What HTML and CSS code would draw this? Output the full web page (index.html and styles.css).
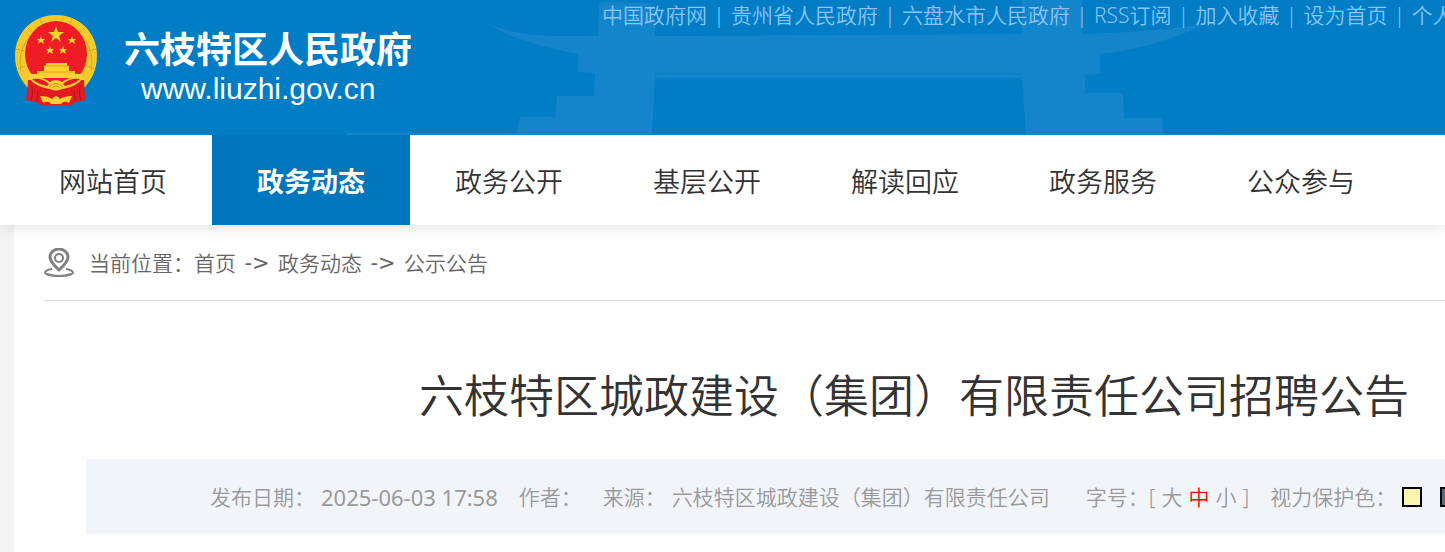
FILE: index.html
```html
<!DOCTYPE html>
<html lang="zh-CN">
<head>
    <meta charset="UTF-8">
    <meta name="viewport" content="width=device-width, initial-scale=1.0">
    <title>六枝特区城政建设（集团）有限责任公司招聘公告</title>
    <link rel="stylesheet" href="styles.css">
</head>
<body>
    <header class="header">
        <svg class="header-bg" width="900" height="135" viewBox="340 0 900 135" aria-hidden="true">
            <path d="M486 23 Q515 36 555 36 L598 36 L599 6 Q600 1 608 2 L650 3 Q655 4 655 10 L655 36 L1022 34 L1022 0 L1082 0 L1082 34 Q1150 32 1205 24 Q1155 48 1100 54 L1100 74 L1085 75 L1085 93 L1123 93 L1124 118 L1162 118 L1163 134 L1224 134 L1224 135 L1026 135 L1022 78 L655 78 L652 130 L654 135 L346 135 L346 133 L517 133 L520 117 L555 117 L557 96 L594 96 L595 73 L578 72 L578 54 Q520 44 486 23 Z"/>
            <path class="header-bg-line" d="M655 74 H1022"/>
        </svg>
        <a class="brand" href="#">
            <svg class="emblem" width="84" height="92" viewBox="0 0 84 92" aria-hidden="true">
                <path fill="#f4ca2b" d="M42 1 C65 1 83 18 83 42 C83 56 77 67 69 75 L15 75 C7 67 1 56 1 42 C1 18 19 1 42 1 Z"/>
                <path fill="none" stroke="#d9a520" stroke-width="1" d="M7 57 A36 37 0 1 1 77 57"/>
                <path fill="none" stroke="#d9a520" d="M14 14 L20 20 M26 5 L29 12 M70 14 L64 20 M58 5 L55 12 M2 35 L10 37 M82 35 L74 37 M4 55 L11 52 M80 55 L73 52"/>
                <ellipse cx="42" cy="40" rx="31" ry="33" fill="#ee1c25"/>
                <g fill="#fbd42f">
                    <path d="M42 12 L44 18 L50 18 L45 22 L47 28 L42 24 L37 28 L39 22 L34 18 L40 18 Z"/>
                    <path d="M27 22 L28 25 L31 25 L29 27 L30 30 L27 28 L24 30 L25 27 L23 25 L26 25 Z"/>
                    <path d="M58 22 L59 25 L62 25 L60 27 L61 30 L58 28 L55 30 L56 27 L54 25 L57 25 Z"/>
                    <path d="M36 32 L37 35 L40 35 L38 37 L39 40 L36 38 L33 40 L34 37 L32 35 L35 35 Z"/>
                    <path d="M49 32 L50 35 L53 35 L51 37 L52 40 L49 38 L46 40 L47 37 L45 35 L48 35 Z"/>
                    <path d="M32 49 H53 V52 H55 V57 H61 V60 H68 V64 H16 V60 H23 V57 H30 V52 H32 Z"/>
                </g>
                <path stroke="#d9a520" d="M30 52 H55 M23 58 H61"/>
                <path fill="#e31b23" d="M14 66 H70 Q70 77 72 86 L62 88 Q56 93 49 91 H35 Q28 93 22 88 L12 86 Q14 77 14 66 Z"/>
                <path fill="#f8d033" d="M15 63 Q28 62 36 68 Q42 64 48 68 Q56 62 69 63 Q65 72 48 75 Q42 78 36 75 Q19 72 15 63 Z"/>
                <path fill="#e31b23" d="M18 65 Q29 64 35 70 L33 72 Q23 70 18 65 Z M66 65 Q55 64 49 70 L51 72 Q61 70 66 65 Z"/>
                <path fill="none" stroke="#d19319" d="M35 73 Q42 66 49 73 M38 74 Q42 70 46 74"/>
                <path fill="#f8d033" d="M26 82 Q34 82 38 85 Q42 79 46 85 Q50 82 58 82 L55 89 Q50 86 47 90 H37 Q34 86 29 89 Z"/>
                <path fill="none" stroke="#b9131b" stroke-width="1" d="M18 72 Q20 80 17 86 M66 72 Q64 80 67 86 M24 76 L23 87 M60 76 L61 87"/>
            </svg>
            <span class="brand-text">
                <span class="brand-name">六枝特区人民政府</span>
                <span class="brand-url">www.liuzhi.gov.cn</span>
            </span>
        </a>
        <div class="top-links">
            <a href="#">中国政府网</a><span class="sep">|</span>
            <a href="#">贵州省人民政府</a><span class="sep">|</span>
            <a href="#">六盘水市人民政府</a><span class="sep">|</span>
            <a href="#">RSS订阅</a><span class="sep">|</span>
            <a href="#">加入收藏</a><span class="sep">|</span>
            <a href="#">设为首页</a><span class="sep">|</span>
            <a href="#">个人中心</a>
        </div>
    </header>

    <nav class="nav">
        <a href="#">网站首页</a>
        <a href="#" class="active">政务动态</a>
        <a href="#">政务公开</a>
        <a href="#">基层公开</a>
        <a href="#">解读回应</a>
        <a href="#">政务服务</a>
        <a href="#">公众参与</a>
    </nav>

    <main class="container">
        <div class="breadcrumb">
            <svg class="pin" width="30" height="30" viewBox="0 0 30 30" fill="none" stroke="#808080" stroke-width="2" aria-hidden="true">
                <path stroke-width="3" d="M15 22 Q6 14 6 9 A9 8 0 0 1 24 9 Q24 14 15 22 Z"/>
                <circle cx="15" cy="10" r="4"/>
                <path d="M8 21 Q1 22 1 25 Q3 28 15 28 Q27 28 29 25 Q29 22 22 21"/>
                <path d="M3 26 Q15 30 27 26"/>
            </svg>
            <span>当前位置：</span>
            <a href="#">首页</a><span class="arrow">-&gt;</span>
            <a href="#">政务动态</a><span class="arrow">-&gt;</span>
            <a href="#">公示公告</a>
        </div>

        <article class="article">
            <h1>六枝特区城政建设（集团）有限责任公司招聘公告</h1>
            <div class="meta">
                <div class="meta-item"><span>发布日期：</span><time class="date">2025-06-03 17:58</time></div>
                <div class="meta-item"><span>作者：</span></div>
                <div class="meta-item source"><span>来源：</span><span>六枝特区城政建设（集团）有限责任公司</span></div>
                <div class="meta-item font-size">
                    <span>字号：</span><span>[</span>
                    <button type="button">大</button>
                    <button type="button" class="current">中</button>
                    <button type="button">小</button>
                    <span>]</span>
                </div>
                <div class="meta-item colors">
                    <span>视力保护色：</span>
                    <button type="button" class="swatch yellow" aria-label="黄色"></button>
                    <button type="button" class="swatch gray" aria-label="灰色"></button>
                </div>
            </div>
        </article>
    </main>
</body>
</html>
```
FILE: styles.css
```css
* {
    margin: 0;
    padding: 0;
    box-sizing: border-box;
}

body {
    font-family: "Noto Sans", "Noto Sans CJK SC", sans-serif;
    font-size: 21px;
    font-weight: 350;
    line-height: 30px;
    color: #666;
    background: #f4f4f4;
    min-height: 100vh;
    display: flex;
    flex-direction: column;
    overflow-x: hidden;
}

a {
    color: inherit;
    text-decoration: none;
}

button {
    font: inherit;
    color: inherit;
    background: none;
    border: none;
    cursor: pointer;
}

/* header */
.header {
    position: relative;
    z-index: 2;
    display: flex;
    align-items: flex-start;
    height: 135px;
    padding-left: 14px;
    background: #007dc5;
    overflow: hidden;
    white-space: nowrap;
}

.header-bg {
    position: absolute;
    left: 340px;
    top: 0;
    fill: #1485ca;
}

.header-bg-line {
    stroke: #0b80c7;
    stroke-width: 2;
}

.brand {
    position: relative;
    display: flex;
    flex: 0 0 588px;
    gap: 26px;
    padding-top: 14px;
    color: #fff;
}

.brand-text {
    display: flex;
    flex-direction: column;
    padding-top: 14px;
}

.brand-name {
    font-size: 36px;
    font-weight: 700;
    line-height: 44px;
}

.brand-url {
    padding-left: 17px;
    font-family: "Liberation Sans", Arial, sans-serif;
    font-size: 30px;
    font-weight: 400;
    line-height: 34px;
}

.top-links {
    position: relative;
    display: flex;
    color: #8ac4f8;
}

.sep {
    width: 24px;
    text-align: center;
}

/* main navigation */
.nav {
    position: relative;
    display: flex;
    padding-left: 14px;
    background: #fff;
    box-shadow: 0 2px 14px rgba(0, 0, 0, 0.12);
}

.nav a {
    flex: 0 0 198px;
    padding-top: 4px;
    font-size: 27px;
    line-height: 86px;
    text-align: center;
    color: #333;
}

.nav a.active {
    font-weight: 700;
    color: #fff;
    background: #0076bc;
}

/* content */
.container {
    flex: 1;
    min-width: 1800px;
    margin-left: 14px;
    padding: 0 30px;
    background: #fff;
}

.breadcrumb {
    display: flex;
    align-items: center;
    height: 76px;
    border-bottom: 1px solid #ddd;
}

.pin {
    margin-right: 15px;
}

.arrow {
    width: 42px;
    font-family: "DejaVu Sans", sans-serif;
    font-weight: 400;
    text-align: center;
}

.article {
    padding: 60px 42px 18px;
}

.article h1 {
    font-size: 45px;
    font-weight: 350;
    line-height: 70px;
    text-align: center;
    color: #333;
}

.meta {
    display: flex;
    align-items: center;
    gap: 21px;
    height: 75px;
    margin-top: 28px;
    padding-left: 124px;
    color: #999;
    background: #f1f5f9;
    white-space: nowrap;
}

.meta-item {
    display: flex;
    align-items: center;
    gap: 6px;
}

.source {
    margin-right: 15px;
}

.date {
    font-size: 22px;
    font-weight: 400;
}

.font-size span:first-child {
    margin-right: -6px;
}

.font-size .current {
    color: #f00;
}

.swatch {
    width: 20px;
    height: 20px;
    margin-right: 12px;
    border: 2px solid #000;
}

.swatch.yellow {
    background: #faf5ad;
}

.swatch.gray {
    background: #5c6b78;
}
```
